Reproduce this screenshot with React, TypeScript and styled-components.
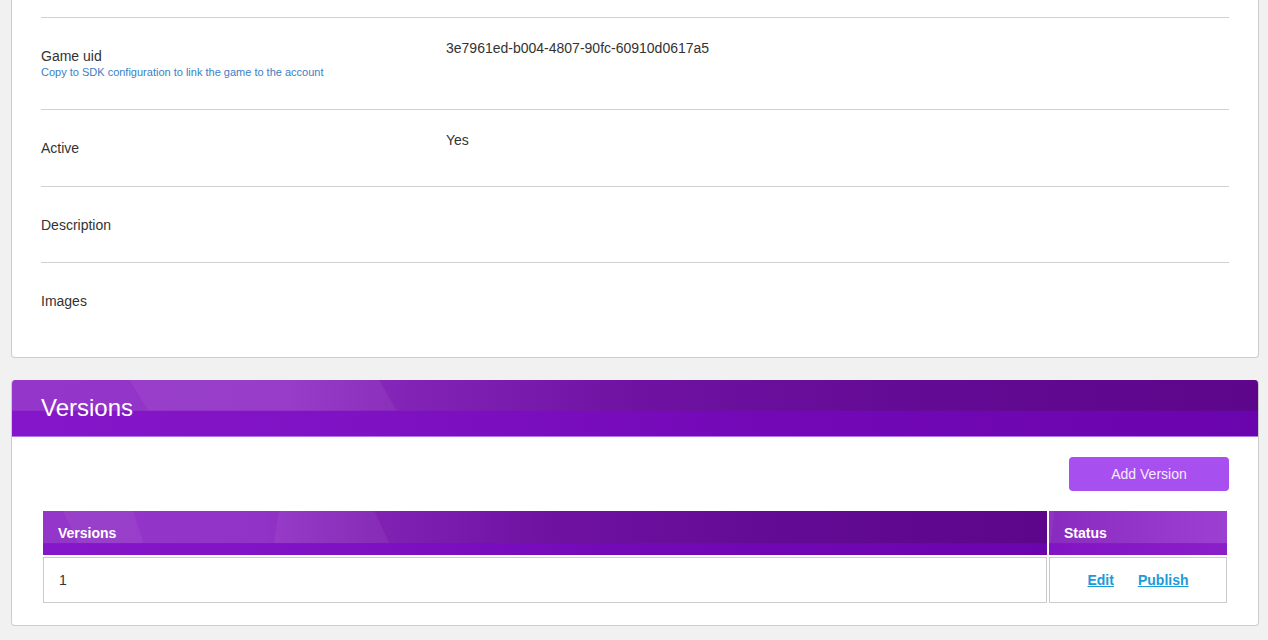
import React, { useId } from "react";
import styled, { createGlobalStyle } from "styled-components";

const GlobalStyle = createGlobalStyle`
  *, *::before, *::after { box-sizing: border-box; }
  html, body { margin: 0; padding: 0; }
  body {
    background: #f1f1f1;
    font-family: "Liberation Sans", Arial, sans-serif;
    font-size: 14px;
    color: #333333;
  }
`;

const Page = styled.div`
  display: flex;
  flex-direction: column;
  gap: 22px;
  padding: 0 9px 15px 11px;
`;

const InfoCard = styled.section`
  background: #ffffff;
  border: 1px solid #cccccc;
  border-top: none;
  border-radius: 0 0 4px 4px;
  padding: 17px 29px 18px;
`;

const InfoRow = styled.div`
  display: grid;
  grid-template-columns: 405px 1fr;
  border-top: 1px solid #d0d0d0;
`;

const Label = styled.div`
  align-self: center;
  padding: 28px 0 27.5px;
  line-height: 20px;
`;

const Hint = styled.span`
  display: block;
  font-size: 11px;
  line-height: 13px;
  padding-bottom: 2.5px;
  color: #3a80c6;
`;

const Value = styled.div`
  align-self: start;
  padding-top: 20px;
  line-height: 20px;
`;

const VersionsCard = styled.section`
  background: #ffffff;
  border: 1px solid #cccccc;
  border-top: none;
  border-radius: 4px;
  overflow: hidden;
`;

const CardHeader = styled.header`
  position: relative;
  height: 57px;
  margin: 0 -1px;
  border-bottom: 1px solid #b574ef;
  padding: 0 30px;
  display: flex;
  align-items: center;
`;

const Title = styled.h2`
  position: relative;
  margin: 0;
  font-size: 24px;
  font-weight: normal;
  color: #ffffff;
  line-height: 28px;
`;

const CardBody = styled.div`
  padding: 20px 29px 20px;
`;

const Toolbar = styled.div`
  display: flex;
  justify-content: flex-end;
  margin-bottom: 18px;
`;

const AddButton = styled.button`
  width: 160px;
  height: 34px;
  border: none;
  border-radius: 4px;
  background: #a84ff0;
  color: #f5ecff;
  font-family: inherit;
  font-size: 14px;
  cursor: pointer;
`;

const Table = styled.table`
  width: 100%;
  table-layout: fixed;
  border-collapse: separate;
  border-spacing: 2px;
`;

const HeadCell = styled.th<{ $w?: number }>`
  position: relative;
  height: 44px;
  padding: 0 15px;
  text-align: left;
  color: #ffffff;
  font-weight: bold;
  font-size: 14px;
  overflow: hidden;
  ${(p) => (p.$w ? `width: ${p.$w}px;` : "")}
`;

const HeadText = styled.span`
  position: relative;
`;

const Cell = styled.td<{ $center?: boolean }>`
  height: 46px;
  padding: 0 15px;
  border: 1px solid #cccccc;
  text-align: ${(p) => (p.$center ? "center" : "left")};
`;

const Actions = styled.span`
  display: inline-flex;
  gap: 24px;
`;

const ActionLink = styled.a`
  color: #1d9ad8;
  font-weight: bold;
  text-decoration: underline;
  cursor: pointer;
`;

const BackdropSvg = styled.svg`
  position: absolute;
  inset: 0;
  width: 100%;
  height: 100%;
  display: block;
`;

type Tone = "deep" | "status";

const palettes: Record<Tone, { top: [number, string][]; bottom: [number, string][] }> = {
  deep: {
    top: [
      [0, "#9436c9"],
      [0.22, "#9233c7"],
      [0.32, "#8223b6"],
      [0.5, "#6f12a2"],
      [0.75, "#620a93"],
      [1, "#5d068b"],
    ],
    bottom: [
      [0, "#8616c9"],
      [0.3, "#7e12c3"],
      [0.6, "#7308b7"],
      [1, "#6a04ad"],
    ],
  },
  status: {
    top: [
      [0, "#8a2bbf"],
      [0.5, "#9435c9"],
      [1, "#9c40d2"],
    ],
    bottom: [
      [0, "#8214c4"],
      [1, "#8a1ec8"],
    ],
  },
};

function Backdrop({ tone, band, shapes }: { tone: Tone; band: number; shapes?: string[] }) {
  const id = useId().replace(/:/g, "");
  const pal = palettes[tone];
  return (
    <BackdropSvg viewBox="0 0 1000 100" preserveAspectRatio="none" aria-hidden="true">
      <defs>
        <linearGradient id={`t${id}`} x1="0" y1="0" x2="1" y2="0">
          {pal.top.map(([o, c]) => (
            <stop key={o} offset={o} stopColor={c} />
          ))}
        </linearGradient>
        <linearGradient id={`b${id}`} x1="0" y1="0" x2="1" y2="0">
          {pal.bottom.map(([o, c]) => (
            <stop key={o} offset={o} stopColor={c} />
          ))}
        </linearGradient>
      </defs>
      <rect x="0" y="0" width="1000" height="100" fill={`url(#t${id})`} />
      {(shapes || []).map((pts, i) => (
        <polygon key={i} points={pts} fill="#ffffff" fillOpacity={0.05} />
      ))}
      <rect x="0" y={band} width="1000" height={100 - band} fill={`url(#b${id})`} />
    </BackdropSvg>
  );
}

const headerShapes = [
  "200,0 295,0 309,55 192,55",
  "95,0 200,0 192,55 110,55",
  "735,100 728,55 1000,55 1000,100",
];

const tableShapes = ["20,0 90,0 100,73 35,73", "235,0 330,0 345,73 230,73"];

const statusShapes = ["0,0 30,0 10,73 0,73"];

export default function App() {
  return (
    <>
      <GlobalStyle />
      <Page>
        <InfoCard>
          <InfoRow>
            <Label>
              Game uid
              <Hint>Copy to SDK configuration to link the game to the account</Hint>
            </Label>
            <Value>3e7961ed-b004-4807-90fc-60910d0617a5</Value>
          </InfoRow>
          <InfoRow>
            <Label>Active</Label>
            <Value>Yes</Value>
          </InfoRow>
          <InfoRow>
            <Label>Description</Label>
            <Value></Value>
          </InfoRow>
          <InfoRow>
            <Label>Images</Label>
            <Value></Value>
          </InfoRow>
        </InfoCard>

        <VersionsCard>
          <CardHeader>
            <Backdrop tone="deep" band={55} shapes={headerShapes} />
            <Title>Versions</Title>
          </CardHeader>
          <CardBody>
            <Toolbar>
              <AddButton type="button">Add Version</AddButton>
            </Toolbar>
            <Table>
              <thead>
                <tr>
                  <HeadCell>
                    <Backdrop tone="deep" band={73} shapes={tableShapes} />
                    <HeadText>Versions</HeadText>
                  </HeadCell>
                  <HeadCell $w={178}>
                    <Backdrop tone="status" band={73} shapes={statusShapes} />
                    <HeadText>Status</HeadText>
                  </HeadCell>
                </tr>
              </thead>
              <tbody>
                <tr>
                  <Cell>1</Cell>
                  <Cell $center>
                    <Actions>
                      <ActionLink>Edit</ActionLink>
                      <ActionLink>Publish</ActionLink>
                    </Actions>
                  </Cell>
                </tr>
              </tbody>
            </Table>
          </CardBody>
        </VersionsCard>
      </Page>
    </>
  );
}
